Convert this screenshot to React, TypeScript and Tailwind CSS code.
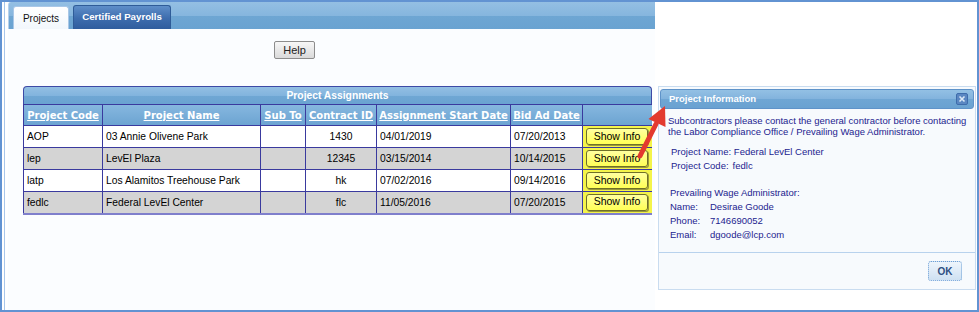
import React from 'react'

const rows = [
    { code: 'AOP', name: '03 Annie Olivene Park', contract: '1430', start: '04/01/2019', bid: '07/20/2013' },
    { code: 'lep', name: 'LevEl Plaza', contract: '12345', start: '03/15/2014', bid: '10/14/2015' },
    { code: 'latp', name: 'Los Alamitos Treehouse Park', contract: 'hk', start: '07/02/2016', bid: '09/14/2016' },
    { code: 'fedlc', name: 'Federal LevEl Center', contract: 'flc', start: '11/05/2016', bid: '07/20/2015' },
]

const headers = ['Project Code', 'Project Name', 'Sub To', 'Contract ID', 'Assignment Start Date', 'Bid Ad Date']
const widths = ['w-[79px]', 'w-[158px]', 'w-[45px]', 'w-[71px]', 'w-[134px]', 'w-[72px]', 'w-[70px]']

const ShowInfo = () => (
    <div className="ml-[3px] w-[62px] h-[17px] rounded-[3px] border border-[#6f6f28] bg-[linear-gradient(to_bottom,#ffffa0,#ffff55)] shadow-[1px_1px_0_#9a9a3a] flex items-center justify-center text-[10.5px] text-black">
        Show Info
    </div>
)

const App: React.FC = () => {
    return (
        <div className="relative w-[979px] h-[312px] bg-white overflow-hidden font-['Liberation_Sans',Arial,sans-serif]">
            <div className="h-full border-2 border-[#6293d2] flex">
                <div className="w-[3px] border-r border-[#a8c6ea]" />
                <div className="w-[3px]" />

                {/* tabs panel */}
                <div className="w-[647px] flex flex-col bg-[#fbfdff]">
                    <div className="h-[27px] flex items-end pl-[4px] gap-[4px] border-l border-[#b6d1ee] rounded-tl-[3px] bg-[linear-gradient(to_bottom,#94bfe3_0%,#86b6de_50%,#6ea6d3_52%,#6aa3d1_100%)]">
                        <div className="w-[56px] h-[23px] rounded-t-[3px] border border-b-0 border-[#a9c7e7] bg-[linear-gradient(to_bottom,#ffffff,#f2f7fc)] flex items-center justify-center text-[10px] text-[#111]">
                            Projects
                        </div>
                        <div className="w-[98px] h-[24px] rounded-t-[3px] border border-b-0 border-[#2f5c98] bg-[linear-gradient(to_bottom,#5e8ec9,#3d6cad_55%,#2f5d9e)] flex items-center justify-center text-[9.7px] font-bold text-white">
                            Certified Payrolls
                        </div>
                    </div>

                    <div className="flex-1 flex flex-col">
                        <div className="mt-[12px] ml-[266px] w-[41px] h-[18px] border border-[#8c8c8c] rounded-[2px] bg-[linear-gradient(to_bottom,#f7f7f7,#dadada)] flex items-center justify-center text-[11px] text-[#222]">
                            Help
                        </div>

                        <div className="mt-[27px] ml-[15px] w-[629px] h-[129px] overflow-hidden">
                            <div className="h-[18px] rounded-t-[4px] border border-b-0 border-[#3d4aa6] bg-[linear-gradient(to_bottom,#93bfe3_0%,#82b4de_50%,#6fa7d4_52%,#6aa3d1_100%)] flex items-center justify-center text-[10.3px] font-bold text-white">
                                Project Assignments
                            </div>
                            <table className="w-[629px] table-fixed border-collapse">
                                <thead>
                                    <tr className="h-[21px] bg-[linear-gradient(to_bottom,#86b7df,#6ba3d1)]">
                                        {headers.map((h, i) => (
                                            <th
                                                key={h}
                                                className={`${widths[i]} p-0 border border-[#3a3a9e] text-center font-['DejaVu_Sans',Verdana,sans-serif] font-bold text-[10px] text-white underline`}
                                            >
                                                {h}
                                            </th>
                                        ))}
                                        <th className="w-[70px] p-0 border border-[#3a3a9e]" />
                                    </tr>
                                </thead>
                                <tbody>
                                    {rows.map((r, i) => (
                                        <tr key={r.code} className={`h-[22px] text-[10.3px] text-black ${i % 2 ? 'bg-[#d4d4d4]' : 'bg-white'}`}>
                                            <td className="px-[3px] py-0 border border-[#3a3a9e]">{r.code}</td>
                                            <td className="px-[3px] py-0 border border-[#3a3a9e]">{r.name}</td>
                                            <td className="px-[3px] py-0 border border-[#3a3a9e]" />
                                            <td className="px-[3px] py-0 border border-[#3a3a9e] text-center">{r.contract}</td>
                                            <td className="px-[3px] py-0 border border-[#3a3a9e]">{r.start}</td>
                                            <td className="px-[3px] py-0 border border-[#3a3a9e]">{r.bid}</td>
                                            <td className="p-0 border border-[#3a3a9e] bg-[#f4f44a]">
                                                <ShowInfo />
                                            </td>
                                        </tr>
                                    ))}
                                    <tr className="h-[10px]">
                                        {widths.map((w) => (
                                            <td key={w} className="p-0 border-x border-[#3a3a9e] border-t-2 border-t-[#7f7fcc]" />
                                        ))}
                                    </tr>
                                </tbody>
                            </table>
                        </div>
                    </div>
                </div>

                {/* right side with dialog */}
                <div className="flex-1 pt-[84px] pl-[3px]">
                    <div className="w-[318px] h-[204px] border border-[#c9dcf0] bg-[#f7fafd] flex flex-col">
                        <div className="mt-[2px] mx-[1px] h-[20px] rounded-[3px] border border-[#5f93c9] bg-[linear-gradient(to_bottom,#93c0e4_0%,#82b3dd_50%,#6fa6d4_52%,#6aa2d1_100%)] flex items-center justify-between pl-[8px] pr-[5px]">
                            <span className="text-[9.5px] font-bold text-white">Project Information</span>
                            <div className="w-[12px] h-[12px] rounded-[2px] border border-[#3e6cab] bg-[#5a87c2] flex items-center justify-center">
                                <svg width="8" height="8" viewBox="0 0 8 8">
                                    <path d="M1.5 1.5 L6.5 6.5 M6.5 1.5 L1.5 6.5" stroke="#dbe8f6" strokeWidth="1.6" />
                                </svg>
                            </div>
                        </div>

                        <div className="pl-[9px] pr-[4px] text-[9.5px] text-[#23238f]">
                            <p className="mt-[6px] leading-[11px]">
                                Subcontractors please contact the general contractor before contacting the Labor Compliance Office / Prevailing Wage Administrator.
                            </p>
                            <div className="mt-[8px] pl-[3px] leading-[14px]">
                                <div>Project Name: Federal LevEl Center</div>
                                <div>
                                    Project Code:<span className="ml-[4px]">fedlc</span>
                                </div>
                            </div>
                            <div className="mt-[13px] pl-[2px] leading-[14px]">
                                <div>Prevailing Wage Administrator:</div>
                                <div className="flex">
                                    <span className="w-[40px]">Name:</span>
                                    <span>Desirae Goode</span>
                                </div>
                                <div className="flex">
                                    <span className="w-[40px]">Phone:</span>
                                    <span>7146690052</span>
                                </div>
                                <div className="flex">
                                    <span className="w-[40px]">Email:</span>
                                    <span>dgoode@lcp.com</span>
                                </div>
                            </div>
                        </div>

                        <div className="mt-[10px] border-t border-[#b8d2ed]" />
                        <div className="flex justify-end pr-[13px] pt-[8px]">
                            <div className="w-[34px] h-[20px] rounded-[3px] border border-dotted border-[#6d9fd6] bg-[linear-gradient(to_bottom,#eef5fc,#cfe1f2)] flex items-center justify-center text-[10px] font-bold text-[#2e4f82]">
                                OK
                            </div>
                        </div>
                    </div>
                </div>
            </div>

            {/* red callout arrow */}
            <svg className="absolute left-0 top-0 pointer-events-none" width="979" height="312">
                <line x1="640" y1="156" x2="656" y2="124" stroke="#e33a2e" strokeWidth="5" strokeLinecap="round" />
                <polygon points="665,106 665.5,127 648.5,119" fill="#e33a2e" />
            </svg>
        </div>
    )
}

export default App
